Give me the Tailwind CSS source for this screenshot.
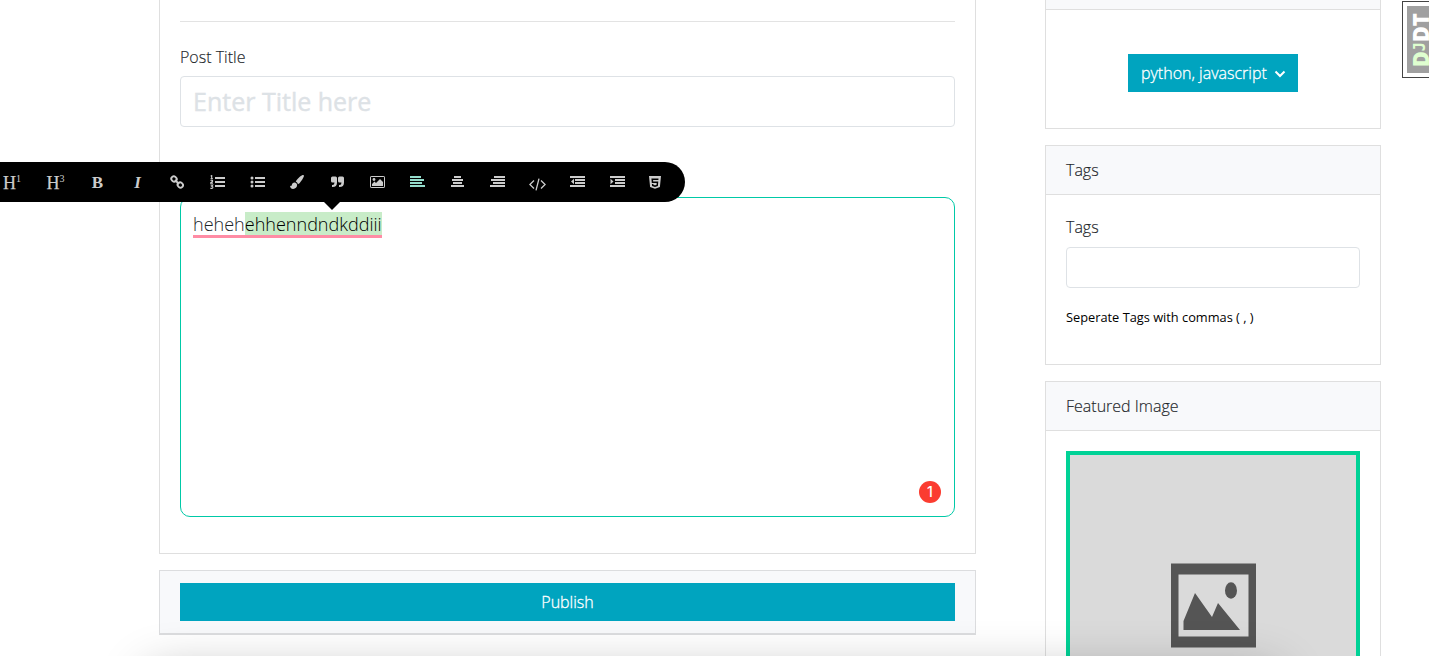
<!DOCTYPE html>
<html lang="en">
<head>
<meta charset="utf-8">
<title>New post</title>
<script src="https://cdn.jsdelivr.net/npm/@tailwindcss/browser@4"></script>
</head>
<body class="bg-white">
<div class="relative h-[656px] w-[1429px] overflow-hidden font-['Open_Sans',sans-serif] text-base font-light leading-6 text-[#212529] antialiased">
  <div class="flex items-start gap-[69px] pl-[159px]">
    <main class="flex w-[817px] flex-col gap-4">
      <section class="relative h-[554px] border border-t-0 border-[#dfdfdf] px-5 pt-[21px]">
        <hr class="border-[#e3e3e3]">
        <label class="mt-[23px] block h-[31px] [-webkit-text-stroke:0.15px_#212529]">Post Title</label>
        <div class="flex h-[51px] items-center rounded border border-[#dee2e6] px-3 pb-[2px] text-[25px] font-normal text-[#dde2e6] [-webkit-text-stroke:0.4px_#dde2e6]">Enter Title here</div>
        <div class="relative mt-[70px] h-[320px] rounded-[10px] border border-[#00c9a7] px-3 pt-[13px] text-[18px] leading-[27px]">
          <span class="inline-flex h-[27px] whitespace-nowrap border-b-[3px] border-[#ff8ca5] text-[18.050px] leading-[26px]">heheh<span class="mt-px h-[23px] bg-[#c8ecc8] leading-6 text-black">ehhenndndkddiii</span></span>
          <span class="absolute right-[13px] bottom-[13px] flex size-[22px] items-center justify-center rounded-full bg-[#fb3c30] font-['Inter',sans-serif] text-sm font-medium text-white">1</span>
        </div>
      </section>
      <section class="h-[65px] border border-b-2 border-[#dcdddf] bg-[#f8f9fb] px-5 pt-3">
        <button class="block h-[38px] w-full bg-[#00a4bf] font-light text-white [-webkit-text-stroke:0.3px_white]">Publish</button>
      </section>
    </main>
    <aside class="flex w-[336px] flex-col gap-4">
      <section class="h-[129px] border border-t-0 border-[#dfdfdf]">
        <div class="h-[10px] border-b border-[#dfdfdf] bg-[#f8f9fb]"></div>
        <div class="flex justify-center pt-11">
          <button class="flex h-[38px] w-[170px] items-center gap-[7px] bg-[#00a4bf] pl-[13px] font-light text-white [-webkit-text-stroke:0.3px_white]"><span>python, javascript</span>
            <svg class="mt-px size-3" viewBox="0 0 12 12" fill="none" stroke="currentColor" stroke-width="2"><path d="M1.500 3.500 6 8l4.500-4.500"/></svg>
          </button>
        </div>
      </section>
      <section class="h-[220px] border border-[#dfdfdf]">
        <h2 class="h-[49px] border-b border-[#dfdfdf] bg-[#f8f9fb] px-5 pt-3 [-webkit-text-stroke:0.15px_#212529]">Tags</h2>
        <div class="px-5 pt-5">
          <label class="block h-8 [-webkit-text-stroke:0.15px_#212529]">Tags</label>
          <div class="h-[41px] rounded border border-[#dee2e6]"></div>
          <p class="mt-[17px] text-[12.800px] font-normal text-black">Seperate Tags with commas ( , )</p>
        </div>
      </section>
      <section class="h-[400px] border border-[#dfdfdf]">
        <h2 class="h-[49px] border-b border-[#dfdfdf] bg-[#f8f9fb] px-5 pt-3 [-webkit-text-stroke:0.15px_#212529]">Featured Image</h2>
        <div class="px-5 pt-5">
          <div class="h-[300px] border-4 border-[#00d296] bg-[#dadada] pt-[108px] pl-[101px]">
            <svg class="h-[85px] w-[85px]" viewBox="0 0 85 85" fill="#555"><path fill-rule="evenodd" d="M0 .5h85v84H0zM7.500 11.500v62h70v-62z"/><path d="M12.500 67V58L24 30l17 24 6-14 22 27z"/><ellipse cx="60" cy="27.500" rx="6" ry="8.300"/></svg>
          </div>
        </div>
      </section>
    </aside>
  </div>

  <!-- Floating format toolbar -->
  <div class="absolute top-[162px] left-0 flex h-10 w-[685px] items-center rounded-r-full bg-black pl-[3px] text-[#ccc]">
    <div class="flex w-[74px] gap-[25px] pt-px font-['Liberation_Serif',serif] text-[18px] leading-6 font-normal [-webkit-text-stroke:0.25px_#ccc]"><span class="flex w-[18.500px]">H<span class="-mt-[4px] text-[10px] [-webkit-text-stroke:0px]">1</span></span><span class="flex w-[18px]">H<span class="-mt-[4px] text-[10px] [-webkit-text-stroke:0px]">3</span></span></div>
    <div class="flex">
      <span class="flex w-10 justify-center pl-px pt-px font-['Liberation_Serif',serif] text-[17px] font-bold">B</span>
      <span class="flex w-10 justify-center pl-px pt-px font-['Liberation_Serif',serif] text-[17px] font-bold italic">I</span>
      <span class="flex w-10 items-center justify-center"><svg class="size-[14px]" viewBox="0 0 14 14" fill="none" stroke="currentColor" stroke-width="1.900"><rect x="-2.700" y="-2.400" width="5.400" height="4.800" rx="2.200" transform="translate(4 4) rotate(45)"/><rect x="-2.700" y="-2.400" width="5.400" height="4.800" rx="2.200" transform="translate(10.300 10) rotate(45)"/><path d="M5 5l4 4"/></svg></span>
      <span class="flex w-10 items-center justify-center"><svg class="h-[14px] w-[15px]" viewBox="0 0 15 14" fill="currentColor"><path d="M5 2h10v2H5zM5 6h10v2H5zM5 10h10v2H5z"/><path fill="none" stroke="currentColor" stroke-width="1.100" d="M.7 1.200l1-.6v3M.5 3.700h2.500M.6 5.700c.5-.8 2.200-.6 2 .4-.1.700-2 1.300-2 2h2.400M.5 10h2.200l-1 1.300c1.600 0 1.600 2.100 0 2.100-.7 0-1-.2-1.200-.4"/></svg></span>
      <span class="flex w-10 items-center justify-center"><svg class="h-[14px] w-[15px]" viewBox="0 0 15 14" fill="currentColor"><path d="M5 2h10v2H5zM5 6h10v2H5zM5 10h10v2H5z"/><circle cx="2" cy="3" r="1.500"/><circle cx="2" cy="7" r="1.500"/><circle cx="2" cy="11" r="1.500"/></svg></span>
      <span class="flex w-10 items-center justify-center"><svg class="h-[14px] w-[14px]" viewBox="0 0 14 14" fill="currentColor"><path d="M12.600.1c.8-.3 1.500.4 1.300 1.200-.5 1.700-2.700 5.200-4.400 6.900-.6.500-1 .8-1.600 1C7.600 7.800 6.800 7 5.700 6.600 6.800 4.700 10.600.8 12.600.1z"/><path d="M4.700 7.400c1.300.3 2.200 1.200 2.400 2.400.1 2.500-1.700 4.100-4 4.100C1.200 13.900.1 12.600 0 10.500c1 .8 1.500.6 1.700-.3.300-1.700 1.400-2.900 3-2.800z"/></svg></span>
      <span class="flex w-10 items-center justify-center"><svg class="h-[12px] w-[13px]" viewBox="0 0 13 12" fill="currentColor"><path id="mark" d="M1.500.5H4.500Q6 .5 6 2V6.500Q6 11 1.500 11H1V9H1.500Q3.500 9 3.500 6.500H1.500Q0 6.500 0 5V2Q0 .5 1.500.5z"/><use href="#mark" x="7"/></svg></span>
      <span class="flex w-10 items-center justify-center"><svg class="h-[12px] w-[15px]" viewBox="0 0 15 12" fill="currentColor"><rect x=".5" y=".5" width="14" height="11" rx=".6" fill="none" stroke="currentColor"/><circle cx="4" cy="3.500" r="1.400"/><path d="M2 10V8l2.500-2.500L6 7l4-4 3 3v4z"/></svg></span>
      <span class="flex w-10 items-center justify-center text-[#94dccb]"><svg class="h-[12px] w-[15px]" viewBox="0 0 15 12" fill="currentColor"><path d="M0 0h11v2H0zM0 3h14v2H0zM0 6h12v2H0zM0 9h15v2H0z"/></svg></span>
      <span class="flex w-10 items-center justify-center"><svg class="h-[12px] w-[15px]" viewBox="0 0 15 12" fill="currentColor"><path d="M4 0h7v2H4zM2 3h11v2H2zM3 6h9v2H3zM1 9h13v2H1z"/></svg></span>
      <span class="flex w-10 items-center justify-center"><svg class="h-[12px] w-[15px]" viewBox="0 0 15 12" fill="currentColor"><path d="M4 0h11v2H4zM1 3h14v2H1zM3 6h12v2H3zM0 9h15v2H0z"/></svg></span>
      <span class="flex w-10 items-center justify-center pt-[5px]"><svg class="h-[13px] w-[17px]" viewBox="0 0 17 13" fill="none" stroke="currentColor" stroke-width="1.300"><path d="M5 2.500.9 6.500 5 10.500M12 2.500l4.100 4-4.100 4M10 .6 7 12.400"/></svg></span>
      <span class="flex w-10 items-center justify-center"><svg class="h-[12px] w-[15px]" viewBox="0 0 15 12" fill="currentColor"><path d="M0 0h15v2H0zM5 3h10v2H5zM5 6h10v2H5zM0 9h15v2H0zM4 2.800v5.400L1 5.500z"/></svg></span>
      <span class="flex w-10 items-center justify-center"><svg class="h-[12px] w-[15px]" viewBox="0 0 15 12" fill="currentColor"><path d="M0 0h15v2H0zM5 3h10v2H5zM5 6h10v2H5zM0 9h15v2H0zM.5 2.800v5.400l3-2.700z"/></svg></span>
      <span class="flex w-9 items-center justify-center"><svg class="h-[13px] w-[12px]" viewBox="0 0 12 13" fill="currentColor"><path fill-rule="evenodd" d="M0 0h12l-1.100 11L6 12.700 1.100 11zM2.400 2.600l.4 4.500h4.900l-.2 1.800L6 9.300l-1.500-.4-.1-1H2.900l.2 2.100L6 10.900l2.900-.9.400-4.400H4.200l-.1-1.500h5.300l.1-1.500z"/></svg></span>
    </div>
    <span class="absolute top-10 left-[324px] size-0 border-x-8 border-t-8 border-x-transparent border-t-black"></span>
  </div>

  <!-- Debug toolbar handle -->
  <div class="absolute top-px left-[1402px] h-[77px] w-10 border border-[#444] bg-white p-1">
    <div class="relative h-[67px] w-9 bg-[#a0a0a0]">
      <span class="absolute top-[7px] -left-[2px] flex -rotate-180 items-center font-['Open_Sans',sans-serif] text-[22px] font-extrabold leading-[30px] text-white [writing-mode:vertical-rl]"><span class="text-[#dfffd0]">D</span><span class="font-['DejaVu_Sans_Mono',monospace] text-[15px] font-bold leading-[30px] text-[#dfffd0]">J</span>DT</span>
    </div>
  </div>

  <!-- Shadow cast by the panel below the fold -->
  <div class="absolute top-[673px] left-[148px] h-24 w-[1130px] rounded-[10px] shadow-[0_0_50px_rgba(0,0,0,0.3)]"></div>
</div>
</body>
</html>
